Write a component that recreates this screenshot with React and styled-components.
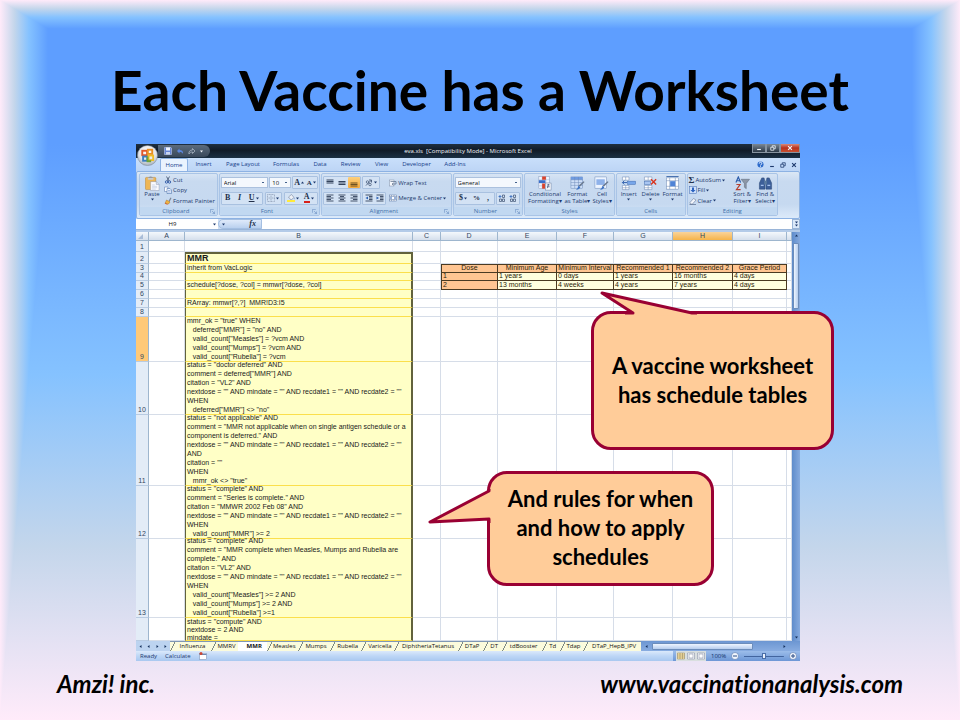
import React from "react";
import styled, { createGlobalStyle, css } from "styled-components";

const GlobalStyle = createGlobalStyle`
  *, *::before, *::after { box-sizing: border-box; }
  body { margin: 0; font-family: Lato, "Open Sans", sans-serif; font-variant-ligatures: none; color: #000; }
  button, input, select { font: inherit; color: inherit; margin: 0; padding: 0; border: 0; background: none; }
`;

/* ---------- slide ---------- */

const edge = "#ffebfa 0%, #c4d6eb 30%, #85c2ff 60%, #5e9eff 100%";

const Slide = styled.main`
  position: relative;
  isolation: isolate;
  min-height: 100vh;
  display: flex;
  flex-direction: column;
  overflow: hidden;
  background: linear-gradient(
    #ffebfa 0%, #c4d6eb 1.2%, #85c2ff 2.4%, #5e9eff 4%,
    #5e9eff 20%, #85c2ff 52%, #c4d6eb 76%, #ffebfa 100%
  );
  &::before, &::after {
    content: "";
    position: absolute;
    z-index: -1;
    top: 0;
    bottom: 0;
    width: 5%;
  }
  &::before {
    left: 0;
    background: linear-gradient(to right, ${edge});
    clip-path: polygon(0 0, 100% 4%, 100% 20%, 0 100%);
  }
  &::after {
    right: 0;
    background: linear-gradient(to left, ${edge});
    clip-path: polygon(100% 0, 0 4%, 0 20%, 100% 100%);
  }
`;

const Title = styled.h1`
  margin: 60px 48px 24px;
  font-size: 55px;
  line-height: 60px;
  font-weight: 700;
  text-align: center;
`;

const Stage = styled.section`
  position: relative;
  margin: 0 160px 0 136px;
`;

const Footer = styled.footer`
  display: flex;
  justify-content: space-between;
  padding: 9px 57px;
  font-size: 24px;
  line-height: 28px;
  font-weight: 700;
  font-style: italic;
`;

const SiteLink = styled.a`
  color: inherit;
  text-decoration: none;
`;

/* ---------- callouts ---------- */

const Callout = styled.aside`
  position: absolute;
  display: flex;
  align-items: center;
  justify-content: center;
  padding-bottom: 2px;
  border: 3px solid #990033;
  border-radius: 20px;
  background: #ffcc99;
  font-size: 22px;
  line-height: 29px;
  font-weight: 700;
  text-align: center;
  white-space: pre-line;
`;

const TableCallout = styled(Callout)`
  top: 167px;
  right: -34px;
  width: 243px;
  height: 139px;
`;

const RulesCallout = styled(Callout)`
  top: 327px;
  left: 351px;
  width: 227px;
  height: 115px;
`;

const Tail = styled.svg`
  position: absolute;
  overflow: visible;
  left: -3px;
  top: -3px;
  width: 1px;
  height: 1px;
  fill: #ffcc99;
  stroke: #990033;
  stroke-width: 3;
  stroke-linejoin: round;
`;

/* ---------- workbook window ---------- */

const Workbook = styled.article`
  font-family: "Open Sans", "Noto Sans", sans-serif;
  font-size: 6px;
  line-height: 8px;
  color: #1e3a6e;
  background: #bfd6f3;
`;

const TitleBar = styled.header`
  display: grid;
  grid-template-columns: 81px 1fr 81px;
  height: 14px;
  align-items: center;
  color: #f2f6fb;
  background: linear-gradient(#1f2f40, #101b28 45%, #1b3044);
`;

const QuickAccess = styled.div`
  display: flex;
  align-items: center;
  gap: 4px;
  height: 12px;
  width: 52px;
  margin-left: 22px;
  padding-left: 6px;
  border-radius: 0 6px 6px 0;
  background: linear-gradient(#5b6b7d, #39485a);
`;

const WindowName = styled.div`
  text-align: center;
  font-weight: 500;
`;

const WindowButtons = styled.div`
  display: grid;
  grid-template-columns: 14px 14px 20px;
  align-self: start;
  justify-self: end;
  height: 9px;
`;

const WindowButton = styled.button`
  display: flex;
  align-items: center;
  justify-content: center;
  height: 9px;
  border: 1px solid #8793a0;
  border-top: 0;
  background: ${(p) => (p.$close ? "linear-gradient(#d98a7a, #b8301c 50%, #c9502f)" : "linear-gradient(#7c8894, #2b3846)")};
`;

const OfficeButton = styled.button`
  position: absolute;
  top: 1px;
  left: 1px;
  width: 21px;
  height: 21px;
`;

const TabStrip = styled.nav`
  display: flex;
  align-items: stretch;
  height: 13px;
  padding-left: 24px;
  background: linear-gradient(#c9dffb, #bdd5f5);
`;

const RibbonTab = styled.button`
  width: ${(p) => p.$w}px;
  line-height: 11px;
  color: #17408b;
  ${(p) =>
    p.$active &&
    css`
      border: 1px solid #8db2e3;
      border-bottom: 0;
      border-radius: 2px 2px 0 0;
      background: #eaf3fe;
    `}
`;

const TabTools = styled.div`
  display: flex;
  align-items: center;
  gap: 5px;
  margin-left: auto;
  padding-right: 3px;
`;

const Ribbon = styled.div`
  display: grid;
  grid-template-columns: 79fr 102fr 131fr 71fr 91fr 70fr 92fr 18fr;
  column-gap: 1px;
  height: 48px;
  padding: 1px 2px 2px;
  border: 1px solid #8db2e3;
  border-radius: 2px;
  background: linear-gradient(#dbe7f5, #c8daf0 20%, #c6d9f0 70%, #dceafa);
`;

const Group = styled.fieldset`
  display: flex;
  flex-direction: column;
  min-width: 0;
  margin: 0;
  padding: 0;
  border: 1px solid #a9c4e6;
  border-radius: 2px;
  overflow: hidden;
`;

const GroupBody = styled.div`
  display: flex;
  flex: 1;
  min-height: 0;
  padding: 1px;
  gap: ${(p) => p.$gap || 0}px;
`;

const GroupLabel = styled.div`
  display: flex;
  height: 8px;
  padding: 0 2px;
  align-items: center;
  line-height: 8px;
  color: #4470a8;
  background: #c1d8f1;
  span { flex: 1; text-align: center; }
`;

const Stack = styled.div`
  display: flex;
  flex-direction: column;
  justify-content: space-around;
  flex: ${(p) => (p.$grow ? 1 : "none")};
  min-width: 0;
`;

const Line = styled.div`
  display: flex;
  align-items: center;
  gap: ${(p) => p.$gap || 0}px;
  height: 12px;
`;

const Tool = styled.button`
  display: flex;
  align-items: center;
  gap: 1px;
  height: 11px;
  min-width: ${(p) => p.$w || 0}px;
  justify-content: ${(p) => (p.$w ? "center" : "flex-start")};
  white-space: nowrap;
  ${(p) => p.$on && "background: linear-gradient(#fdd07c, #f5a93b); border-radius: 1px;"}
`;

const ToolSet = styled.div`
  display: flex;
  border: 1px solid #a9c1e0;
  border-radius: 1px;
  background: #d3e2f4;
`;

const BigTool = styled.button`
  display: flex;
  flex-direction: column;
  align-items: center;
  width: ${(p) => p.$w}px;
  padding-top: 1px;
  line-height: 7px;
  white-space: pre;
`;

const Combo = styled.select`
  appearance: none;
  width: ${(p) => p.$w}px;
  height: 11px;
  padding-left: 2px;
  color: #111;
  border: 1px solid #abc1de;
  background: #f4f8fd linear-gradient(#44618c, #44618c) right 3px center / 2px 1px no-repeat;
`;

const FormulaBar = styled.div`
  display: grid;
  grid-template-columns: 82px 44px 1fr 8px;
  height: 11px;
  background: #cfdff3;
  border-bottom: 1px solid #9ab5d8;
`;

const NameBox = styled.input`
  width: 100%;
  padding-right: 4px;
  text-align: center;
  color: #111;
  background: #fff;
`;

const NameArea = styled.label`
  display: flex;
  align-items: center;
  padding-right: 2px;
  background: #fff;
`;

const FxButton = styled.button`
  display: flex;
  align-items: center;
  justify-content: space-between;
  padding: 0 5px 0 3px;
  border-radius: 5px 0 0 5px;
  border: 1px solid #a4bfe2;
  background: linear-gradient(#dfeafa, #b9d0ee);
`;

const FormulaInput = styled.input`
  width: 100%;
  background: #fff;
`;

const ExpandButton = styled.button`
  display: flex;
  flex-direction: column;
  align-items: center;
  justify-content: center;
  border: 1px solid #9ab5d8;
  background: #dce9f9;
`;

/* ---------- sheet ---------- */

const SheetArea = styled.div`
  display: grid;
  grid-template-columns: 1fr 8px;
  border-top: 2px solid #b4cbe8;
`;

const Sheet = styled.table`
  width: 100%;
  table-layout: fixed;
  border-collapse: separate;
  border-spacing: 0;
  background: #fff;
  color: #1a1a1a;
  font-family: "Liberation Sans", Arial, sans-serif;
  font-size: 7px;
  line-height: 9px;
`;

const ColHead = styled.th`
  height: 9px;
  padding: 0;
  line-height: 8px;
  font-weight: 400;
  color: #33475f;
  border-right: 1px solid #9eb6ce;
  border-bottom: 1px solid #9eb6ce;
  background: ${(p) => (p.$on ? "linear-gradient(#f9d39a, #f6b44a)" : "linear-gradient(#f4f8fc, #d5dfec)")};
`;

const RowHead = styled.th`
  padding: 0;
  vertical-align: bottom;
  font-weight: 400;
  color: #33475f;
  border-right: 1px solid #9eb6ce;
  border-bottom: 1px solid #b8cbe2;
  background: ${(p) => (p.$on ? "#ffc978" : "#e3ecf7")};
`;

const Cell = styled.td`
  padding: 0;
  border-right: 1px solid #d6dde8;
  border-bottom: 1px solid #d6dde8;
`;

const RuleCell = styled(Cell)`
  border-left: 1px solid #62623c;
  border-right: 2px solid #62623c;
  border-bottom-color: #fbdf4c;
  border-top: ${(p) => (p.$first ? "2px solid #62623c" : "0")};
  background: #ffffc6;
`;

const GridCell = styled(Cell)`
  border-right-color: #4a3a22;
  border-bottom-color: #4a3a22;
  border-top: ${(p) => (p.$top ? "1px solid #4a3a22" : "0")};
  border-left: ${(p) => (p.$start ? "1px solid #4a3a22" : "0")};
  color: #2c1d08;
  background: ${(p) => (p.$fill ? "#ffc592" : "#ffffdf")};
`;

const CellText = styled.div`
  display: flex;
  flex-direction: column;
  justify-content: ${(p) => (p.$clip ? "flex-start" : "flex-end")};
  height: ${(p) => p.$h}px;
  overflow: ${(p) => (p.$clip ? "hidden" : "visible")};
  text-align: ${(p) => (p.$center ? "center" : "left")};
  white-space: pre;
  font-weight: ${(p) => (p.$strong ? 700 : 400)};
  font-size: ${(p) => (p.$strong ? 9 : 7)}px;
  line-height: ${(p) => (p.$clip ? 8 : 9)}px;
  padding-left: ${(p) => (p.$center ? 0 : 1)}px;
`;

const ScrollColumn = styled.div`
  display: flex;
  flex-direction: column;
  align-items: center;
  justify-content: space-between;
  padding: 2px 1px;
  color: #15305c;
  background: linear-gradient(to right, #5f8ccb, #86aade);
`;

const ScrollTop = styled.div`
  display: flex;
  flex-direction: column;
  align-items: center;
  gap: 6px;
`;

const Thumb = styled.div`
  border: 1px solid #6c8dbb;
  border-radius: 1px;
  background: linear-gradient(${(p) => (p.$across ? "to bottom" : "to right")}, #eef5ff, #b6cdee);
  ${(p) => (p.$across ? "flex: none; width: 101px; height: 7px;" : "width: 6px; height: 66px;")}
`;

const SheetTabs = styled.nav`
  display: flex;
  height: 10px;
  align-items: center;
  background: #bcd3f0;
`;

const NavArrows = styled.div`
  display: flex;
  justify-content: space-around;
  width: 34px;
  color: #15305c;
`;

const SheetTab = styled.button`
  display: flex;
  justify-content: center;
  height: 10px;
  padding-left: 4px;
  flex: ${(p) => p.$w} 1 0;
  min-width: 0;
  line-height: 9px;
  white-space: nowrap;
  color: #111;
  border-top: 1px solid #7f97b5;
  background: ${(p) => (p.$on ? "#fff" : "linear-gradient(117deg, #fbfbdc 4px, #7d8a86 4px, #7d8a86 5px, #fbfbdc 5px)")};
  font-weight: ${(p) => (p.$on ? 700 : 400)};
`;

const TabSet = styled.div`
  display: flex;
  flex: 1;
  min-width: 0;
`;

const ScrollRow = styled.div`
  display: flex;
  align-items: center;
  width: 159px;
  height: 10px;
  padding: 0 14px 0 4px;
  gap: 4px;
  color: #15305c;
  background: linear-gradient(#6c96d2, #88ace0);
`;

const ScrollEnd = styled.span`
  margin-left: auto;
`;

const StatusBar = styled.footer`
  display: grid;
  grid-template-columns: 1fr 127px;
  height: 10px;
  background: linear-gradient(#dbe9fb, #bdd6f6 50%, #a9c8f0);
`;

const StatusLeft = styled.div`
  display: flex;
  align-items: center;
  gap: 8px;
  padding-left: 4px;
`;

const StatusRight = styled.div`
  display: flex;
  align-items: center;
  gap: 5px;
  padding: 0 3px;
  color: #12326b;
  background: linear-gradient(#9cbdea, #6d97d6);
`;

const ViewSet = styled.div`
  display: flex;
  gap: 2px;
  padding: 1px;
  background: #d9dfdf;
`;

const Zoom = styled.input`
  appearance: none;
  flex: 1;
  min-width: 0;
  height: 8px;
  background: linear-gradient(#42659f, #42659f) center / 100% 1px no-repeat;
  &::-webkit-slider-thumb {
    appearance: none;
    width: 4px;
    height: 6px;
    border: 1px solid #4a6ea8;
    background: #e9f1fc;
  }
`;

/* ---------- drawings ---------- */

const Glyph = styled.svg`
  display: block;
  flex: none;
  width: ${(p) => p.$w || 8}px;
  height: ${(p) => p.$w || 8}px;
`;

const Arrow = ({ up, left, right }) => (
  <Glyph $w={3} viewBox="0 0 6 6" aria-hidden="true">
    <path fill="currentColor" d={up ? "M0 5h6L3 1z" : left ? "M5 0v6L1 3z" : right ? "M1 0v6l4-3z" : "M0 1h6L3 5z"} />
  </Glyph>
);

const art = {
  office: (
    <>
      <defs>
        <radialGradient id="orb" cx="50%" cy="35%" r="65%">
          <stop offset="0" stopColor="#ffffff" />
          <stop offset="0.65" stopColor="#e4e6ea" />
          <stop offset="1" stopColor="#a3adba" />
        </radialGradient>
      </defs>
      <circle cx="10" cy="10" r="9.6" fill="url(#orb)" stroke="#7b8796" strokeWidth=".5" />
      <g fill="none" strokeWidth="1.8">
        <rect x="5" y="5.5" width="4.6" height="4.2" stroke="#e2572a" />
        <rect x="10.3" y="4.5" width="4.2" height="4" stroke="#e98f24" />
        <rect x="5.8" y="11" width="4" height="4" stroke="#3a7dc0" />
        <rect x="11" y="10" width="4.4" height="4.4" stroke="#f0bd28" />
        <path d="M10 11v4.5h3.5" stroke="#6aa33b" />
      </g>
    </>
  ),
  save: (
    <>
      <path d="M1 1h13l1 1v13H1z" fill="#6585d6" stroke="#cfdafa" />
      <path d="M4 1h8v6H4z" fill="#f2f6ff" />
      <path d="M4 10h8v5H4z" fill="#c9d6f0" />
    </>
  ),
  undo: <path d="M2 8l5-5v3c5 0 8 3 7 8-1-3-3-4-7-4v3z" fill="#5b86dc" />,
  redo: <path d="M14 8L9 3v3C4 6 1 9 2 14c1-3 3-4 7-4v3z" fill="none" stroke="#aeb8c5" strokeWidth="1.5" />,
  paste: (
    <>
      <rect x="1" y="3" width="22" height="26" rx="2" fill="#eeb654" stroke="#b9812e" />
      <path d="M7 5q0-4 5-4t5 4z" fill="#8c939c" />
      <rect x="6" y="4" width="12" height="4" fill="#c9ccd2" />
      <path d="M12 12h12l6 6v13H12z" fill="#fbfcff" stroke="#8794b0" />
      <path d="M24 12v6h6" fill="#d6deee" stroke="#8794b0" />
      <path d="M15 19h6M15 22h11M15 25h11M15 28h8" stroke="#a4b5d4" />
    </>
  ),
  cut: (
    <>
      <path d="M5 1l5 9M11 1L6 10" stroke="#4d5f7a" strokeWidth="1.8" />
      <circle cx="5" cy="12" r="2.4" fill="none" stroke="#2f59a6" strokeWidth="1.8" />
      <circle cx="11" cy="12" r="2.4" fill="none" stroke="#2f59a6" strokeWidth="1.8" />
    </>
  ),
  copy: (
    <>
      <path d="M1 2h7v9H1z" fill="#fff" stroke="#4e6fa8" />
      <path d="M6 5h6l3 3v7H6z" fill="#e9f1ff" stroke="#36609f" />
      <path d="M8 9h5M8 12h5" stroke="#5d83c0" />
    </>
  ),
  brush: (
    <>
      <path d="M9 8l4-7 2 1-4 8z" fill="#7c8798" />
      <path d="M5 6l7 4-3 4-7-1z" fill="#f2b33d" stroke="#a9782a" />
      <path d="M2 12l5 3" stroke="#d8522c" strokeWidth="1.5" />
    </>
  ),
  borders: <path d="M1 1h14v14H1zM8 1v14M1 8h14" fill="none" stroke="#8d9bb3" strokeDasharray="2 1" strokeWidth="1.4" />,
  bucket: (
    <>
      <path d="M3 6l6-5 5 6-6 5z" fill="#eef1f6" stroke="#5f6f8a" />
      <path d="M14 7q2 3 0 4z" fill="#3d6db8" />
      <rect y="12" width="16" height="4" fill="#ffea3b" />
    </>
  ),
  barsTop: <path d="M1 2h14M1 5h14M1 8h14" stroke="#33435c" strokeWidth="2" />,
  barsMid: <path d="M1 5h14M1 8h14M1 11h14" stroke="#33435c" strokeWidth="2" />,
  barsLow: <path d="M1 8h14M1 11h14M1 14h14" stroke="#6d5120" strokeWidth="2" />,
  left: <path d="M1 2h14M1 5h9M1 8h14M1 11h9M1 14h14" stroke="#33435c" strokeWidth="1.8" />,
  mid: <path d="M1 2h14M4 5h8M1 8h14M4 11h8M1 14h14" stroke="#33435c" strokeWidth="1.8" />,
  right: <path d="M1 2h14M6 5h9M1 8h14M6 11h9M1 14h14" stroke="#33435c" strokeWidth="1.8" />,
  outdent: (
    <>
      <path d="M1 2h14M8 5h7M8 8h7M8 11h7M1 14h14" stroke="#33435c" strokeWidth="1.8" />
      <path d="M6 5v6L1 8z" fill="#2c62b7" />
    </>
  ),
  indent: (
    <>
      <path d="M1 2h14M8 5h7M8 8h7M8 11h7M1 14h14" stroke="#33435c" strokeWidth="1.8" />
      <path d="M1 5v6l5-3z" fill="#2c62b7" />
    </>
  ),
  orient: (
    <>
      <path d="M2 13L13 2M13 2v5M13 2H8" stroke="#46597a" strokeWidth="1.8" fill="none" />
      <circle cx="5" cy="6" r="2.5" fill="none" stroke="#46597a" strokeWidth="1.5" />
      <circle cx="10" cy="11" r="2.5" fill="none" stroke="#46597a" strokeWidth="1.5" />
    </>
  ),
  wrap: (
    <>
      <rect x="1" y="2" width="9" height="12" fill="#f6f8fc" stroke="#7f8fa8" />
      <path d="M3 5h11v5H7M9 8l-3 2 3 3" stroke="#61748f" strokeWidth="1.5" fill="none" />
    </>
  ),
  merge: (
    <>
      <rect x="1" y="2" width="14" height="12" fill="#fff" stroke="#5874a0" />
      <path d="M1 5h14M1 11h14M5 2v3M10 2v3M5 11v3M10 11v3" stroke="#5874a0" />
      <path d="M2 8h4M10 8h4" stroke="#2c62b7" strokeWidth="2" />
    </>
  ),
  decimals: (
    <>
      <path d="M2 5h5M5 2L2 5l3 3" stroke="#2c62b7" strokeWidth="1.6" fill="none" />
      <path d="M9 2h4v5H9zM3 10h4v5H3zM9 10h4v5H9z" fill="none" stroke="#46597a" strokeWidth="1.5" />
    </>
  ),
  conditional: (
    <>
      <rect x="4" y="1" width="22" height="26" fill="#f4f8ff" stroke="#7d93b8" />
      <path d="M4 8h22M4 15h22M4 21h22M11 1v26M19 1v26" stroke="#9ab0d2" />
      <rect x="11" y="1" width="8" height="7" fill="#d8432c" />
      <rect x="4" y="9" width="14" height="6" fill="#3a6fca" />
      <rect x="11" y="16" width="6" height="11" fill="#d8432c" />
      <rect x="18" y="15" width="12" height="15" fill="#f7f9fd" stroke="#66789a" />
      <path d="M21 19h6M21 23h6M25 17l-3 9" stroke="#41557c" strokeWidth="1.5" />
    </>
  ),
  table: (
    <>
      <rect x="2" y="2" width="25" height="24" fill="#cfe0f8" stroke="#6684b4" />
      <rect x="2" y="2" width="25" height="6" fill="#6f9be0" />
      <path d="M2 8h25M2 14h25M2 20h25M10 2v24M18 2v24" stroke="#6684b4" />
      <path d="M29 11l2 2-10 10-3-2z" fill="#68788f" />
      <path d="M18 21l4 3q-2 6-9 5 4-2 5-8z" fill="#3f74c5" />
    </>
  ),
  styles: (
    <>
      <rect x="2" y="2" width="25" height="24" fill="#edf4ff" stroke="#6684b4" />
      <rect x="5" y="7" width="18" height="12" fill="#8fb2ea" />
      <path d="M29 11l2 2-10 10-3-2z" fill="#68788f" />
      <path d="M18 21l4 3q-2 6-9 5 4-2 5-8z" fill="#3f74c5" />
    </>
  ),
  insert: (
    <>
      <path d="M3 2h14v7H3zM3 20h14v9H3zM10 2v7M10 20v9M3 25h14" fill="#fff" stroke="#5e7cab" />
      <rect x="14" y="11" width="17" height="7" fill="#77a6ea" stroke="#3d67ab" />
      <path d="M13 14H3m4-4l-4 4 4 4" fill="none" stroke="#2b5cab" strokeWidth="2" />
    </>
  ),
  remove: (
    <>
      <path d="M3 2h16v7H3zM3 20h16v9H3zM11 2v7M11 20v9M3 25h16" fill="#fff" stroke="#5e7cab" />
      <rect x="3" y="11" width="13" height="7" fill="#a9c6f2" stroke="#3d67ab" />
      <path d="M17 7l11 11M28 7L17 18" stroke="#d8341f" strokeWidth="3" />
    </>
  ),
  format: (
    <>
      <rect x="3" y="4" width="26" height="24" fill="#fff" stroke="#5e7cab" />
      <path d="M3 10h26M3 22h26M10 4v24M22 4v24" stroke="#5e7cab" />
      <rect x="11" y="11" width="11" height="11" fill="#4f83d6" />
      <path d="M3 1h26" stroke="#3d67ab" strokeWidth="2" />
    </>
  ),
  fill: (
    <>
      <rect x="1" y="1" width="14" height="14" fill="#cfe0fa" stroke="#3e68ae" />
      <path d="M6 3h4v5h3l-5 5-5-5h3z" fill="#2a62c0" />
    </>
  ),
  clear: (
    <>
      <path d="M2 11l7-8 5 3-7 8H3z" fill="#f3f5fb" stroke="#56698a" />
      <path d="M1 15h13" stroke="#56698a" strokeWidth="1.4" />
    </>
  ),
  sort: (
    <>
      <path d="M2 14L7 2l5 12M4 10h6" stroke="#2b5cab" strokeWidth="2.4" fill="none" />
      <path d="M3 18h8l-8 11h9" stroke="#b5402f" strokeWidth="2.4" fill="none" />
      <path d="M13 7h18l-7 9v11l-4-3v-8z" fill="#8d97a6" stroke="#566274" />
    </>
  ),
  find: (
    <>
      <path d="M8 4h5l2 10v14H3V15zM19 4h5l5 11v13H17V14z" fill="#3d5f99" stroke="#22406f" />
      <path d="M13 10h6v8h-6z" fill="#58799f" />
      <path d="M6 20h6M20 20h6" stroke="#a5c1ee" strokeWidth="3" />
    </>
  ),
  launcher: <path d="M1 9V1h8M5 5l6 6M11 6v5H6" fill="none" stroke="#6b8fc2" strokeWidth="1.5" />,
  help: (
    <>
      <circle cx="8" cy="8" r="7" fill="#2d6bcb" />
      <path d="M5 6q0-3 3-3t3 3q0 2-3 3v1M8 12v2" stroke="#fff" strokeWidth="2" fill="none" />
    </>
  ),
  minimize: <path d="M3 12h10" stroke="currentColor" strokeWidth="3" />,
  restore: <path d="M2 6h8v8H2zM6 6V2h8v8h-4" fill="none" stroke="currentColor" strokeWidth="2" />,
  close: <path d="M3 3l10 10M13 3L3 13" stroke="currentColor" strokeWidth="3" />,
  corner: <path d="M14 4v10H4z" fill="#a9bdd8" />,
  macro: (
    <>
      <rect x="1" y="3" width="14" height="12" fill="#fff" stroke="#6f87ae" />
      <path d="M1 5h14" stroke="#6f87ae" strokeWidth="2" />
      <circle cx="4" cy="3" r="3" fill="#cf4733" />
    </>
  ),
  grid: <path d="M1 2h14v12H1zM1 6h14M1 10h14M6 2v12M11 2v12" fill="#ffe9a8" stroke="#8a7f5a" />,
  page: <path d="M1 2h14v12H1zM4 4h8v8H4z" fill="#fff" stroke="#77809a" />,
  plus: (
    <>
      <circle cx="8" cy="8" r="7" fill="#f4f8fe" stroke="#44669f" />
      <path d="M4 8h8M8 4v8" stroke="#2b4c86" strokeWidth="2" />
    </>
  ),
  minus: (
    <>
      <circle cx="8" cy="8" r="7" fill="#f4f8fe" stroke="#44669f" />
      <path d="M4 8h8" stroke="#2b4c86" strokeWidth="2" />
    </>
  ),
};

const Icon = ({ name, size = 8, box = 16 }) => (
  <Glyph $w={size} viewBox={`0 0 ${box} ${box}`} aria-hidden="true">
    {art[name]}
  </Glyph>
);

const Letter = styled.span`
  font-family: "Liberation Serif", serif;
  font-weight: 700;
  font-size: ${(p) => p.$size || 8}px;
  font-style: ${(p) => (p.$italic ? "italic" : "normal")};
  text-decoration: ${(p) => (p.$under ? "underline" : "none")};
  border-bottom: ${(p) => (p.$bar ? "2px solid #d8201a" : "0")};
  line-height: 8px;
  color: #22304a;
`;

/* ---------- data ---------- */

const ribbonTabs = [
  ["Home", 28], ["Insert", 31], ["Page Layout", 48], ["Formulas", 38], ["Data", 30],
  ["Review", 31], ["View", 31], ["Developer", 39], ["Add-Ins", 38],
];

const columns = [
  ["", 13], ["A", 36], ["B", 228], ["C", 28], ["D", 57], ["E", 59],
  ["F", 57], ["G", 59], ["H", 60], ["I", 54], ["", 5],
];

const dates = 'nextdose = "" AND mindate = "" AND recdate1 = "" AND recdate2 = ""';

const rows = [
  { h: 11, lines: [] },
  { h: 12, lines: ["MMR"], strong: true },
  { h: 9, lines: ["inherit from VacLogic"], grid: ["Dose", "Minimum Age", "Minimum Interval", "Recommended 1", "Recommended 2", "Grace Period"] },
  { h: 8, lines: [""], grid: ["1", "1 years", "0 days", "1 years", "16 months", "4 days"] },
  { h: 9, lines: ["schedule[?dose, ?col] = mmwr[?dose, ?col]"], grid: ["2", "13 months", "4 weeks", "4 years", "7 years", "4 days"] },
  { h: 9, lines: [""] },
  { h: 9, lines: ["RArray: mmwr[?,?]  MMR!D3:I5"] },
  { h: 9, lines: [""] },
  { h: 45, lines: ['mmr_ok = "true" WHEN', '   deferred["MMR"] = "no" AND', '   valid_count["Measles"] = ?vcm AND', '   valid_count["Mumps"] = ?vcm AND', '   valid_count["Rubella"] = ?vcm'] },
  { h: 53, lines: ['status = "doctor deferred" AND', 'comment = deferred["MMR"] AND', 'citation = "VL2" AND', dates, "WHEN", '   deferred["MMR"] <> "no"'] },
  { h: 71, lines: ['status = "not applicable" AND', 'comment = "MMR not applicable when on single antigen schedule or a', 'component is deferred." AND', dates, "AND", 'citation = ""', "WHEN", '   mmr_ok <> "true"'] },
  { h: 53, lines: ['status = "complete" AND', 'comment = "Series is complete." AND', 'citation = "MMWR 2002 Feb 08" AND', dates, "WHEN", '   valid_count["MMR"] >= 2'] },
  { h: 79, lines: ['status = "complete" AND', 'comment = "MMR complete when Measles, Mumps and Rubella are', 'complete." AND', 'citation = "VL2" AND', dates, "WHEN", '   valid_count["Measles"] >= 2 AND', '   valid_count["Mumps"] >= 2 AND', '   valid_count["Rubella"] >=1'] },
  { h: 23, lines: ['status = "compute" AND', "nextdose = 2 AND", "mindate ="], clip: true },
];

const sheetTabs = [
  ["Influenza", 42], ["MMRV", 26], ["MMR", 28], ["Measles", 31], ["Mumps", 32], ["Rubella", 31], ["Varicella", 33],
  ["DiphtheriaTetanus", 67], ["DTaP", 24], ["DT", 17], ["tdBooster", 41], ["Td", 16], ["Tdap", 22], ["DTaP_HepB_IPV", 61],
];

/* ---------- parts ---------- */

const RibbonGroup = ({ label, launcher, gap, children }) => (
  <Group aria-label={label}>
    <GroupBody $gap={gap}>{children}</GroupBody>
    <GroupLabel>
      <span>{label}</span>
      {launcher && <Icon name="launcher" size={5} box={12} />}
    </GroupLabel>
  </Group>
);

const Big = ({ icon, w, label, arrow }) => (
  <BigTool $w={w} type="button">
    <Icon name={icon} size={15} box={32} />
    <span>{label}</span>
    {arrow && <Arrow />}
  </BigTool>
);

const IconTool = ({ icon, label, w, on, arrow, text }) => (
  <Tool type="button" $w={w} $on={on} aria-label={label}>
    <Icon name={icon} size={8} />
    {text && <span>{text}</span>}
    {arrow && <Arrow />}
  </Tool>
);

const RibbonBar = () => (
  <Ribbon>
    <RibbonGroup label="Clipboard" launcher gap={1}>
      <Big icon="paste" w={22} label="Paste" arrow />
      <Stack>
        <IconTool icon="cut" label="Cut" text="Cut" />
        <IconTool icon="copy" label="Copy" text="Copy" />
        <IconTool icon="brush" label="Format Painter" text="Format Painter" />
      </Stack>
    </RibbonGroup>
    <RibbonGroup label="Font" launcher>
      <Stack $grow>
        <Line $gap={1}>
          <Combo $w={48} aria-label="Font" defaultValue="Arial"><option>Arial</option></Combo>
          <Combo $w={22} aria-label="Font size" defaultValue="10"><option>10</option></Combo>
          <ToolSet>
            <Tool $w={12} type="button" aria-label="Grow font"><Letter>A</Letter><Arrow up /></Tool>
            <Tool $w={12} type="button" aria-label="Shrink font"><Letter $size={7}>A</Letter><Arrow /></Tool>
          </ToolSet>
        </Line>
        <Line $gap={2}>
          <ToolSet>
            <Tool $w={12} type="button" aria-label="Bold"><Letter>B</Letter></Tool>
            <Tool $w={12} type="button" aria-label="Italic"><Letter $italic>I</Letter></Tool>
            <Tool $w={16} type="button" aria-label="Underline"><Letter $under>U</Letter><Arrow /></Tool>
          </ToolSet>
          <ToolSet><IconTool icon="borders" label="Borders" w={15} arrow /></ToolSet>
          <ToolSet>
            <IconTool icon="bucket" label="Fill colour" w={16} arrow />
            <Tool $w={16} type="button" aria-label="Font colour"><Letter $bar>A</Letter><Arrow /></Tool>
          </ToolSet>
        </Line>
      </Stack>
    </RibbonGroup>
    <RibbonGroup label="Alignment" launcher gap={3}>
      <Stack>
        <Line $gap={1}>
          <ToolSet>
            <IconTool icon="barsTop" label="Top align" w={12} />
            <IconTool icon="barsMid" label="Middle align" w={12} />
            <IconTool icon="barsLow" label="Bottom align" w={12} on />
          </ToolSet>
          <ToolSet><IconTool icon="orient" label="Orientation" w={16} arrow /></ToolSet>
        </Line>
        <Line $gap={1}>
          <ToolSet>
            <IconTool icon="left" label="Align left" w={12} />
            <IconTool icon="mid" label="Center" w={12} />
            <IconTool icon="right" label="Align right" w={12} />
          </ToolSet>
          <ToolSet>
            <IconTool icon="outdent" label="Decrease indent" w={11} />
            <IconTool icon="indent" label="Increase indent" w={11} />
          </ToolSet>
        </Line>
      </Stack>
      <Stack>
        <IconTool icon="wrap" label="Wrap Text" text="Wrap Text" />
        <IconTool icon="merge" label="Merge & Center" text="Merge & Center" arrow />
      </Stack>
    </RibbonGroup>
    <RibbonGroup label="Number" launcher>
      <Stack $grow>
        <Line><Combo $w={66} aria-label="Number format" defaultValue="General"><option>General</option></Combo></Line>
        <Line $gap={1}>
          <ToolSet>
            <Tool $w={15} type="button" aria-label="Currency"><Letter>$</Letter><Arrow /></Tool>
            <Tool $w={12} type="button" aria-label="Percent"><Letter $size={7}>%</Letter></Tool>
            <Tool $w={11} type="button" aria-label="Comma"><Letter>,</Letter></Tool>
          </ToolSet>
          <ToolSet>
            <IconTool icon="decimals" label="Increase decimal" w={11} />
            <IconTool icon="decimals" label="Decrease decimal" w={11} />
          </ToolSet>
        </Line>
      </Stack>
    </RibbonGroup>
    <RibbonGroup label="Styles">
      <Big icon="conditional" w={38} label={"Conditional\nFormatting\u25BE"} />
      <Big icon="table" w={28} label={"Format\nas Table\u25BE"} />
      <Big icon="styles" w={22} label={"Cell\nStyles\u25BE"} />
    </RibbonGroup>
    <RibbonGroup label="Cells">
      <Big icon="insert" w={22} label="Insert" arrow />
      <Big icon="remove" w={22} label="Delete" arrow />
      <Big icon="format" w={22} label="Format" arrow />
    </RibbonGroup>
    <RibbonGroup label="Editing" gap={1}>
      <Stack $grow>
        <Tool type="button"><Letter $size={9}>Σ</Letter><span>AutoSum</span><Arrow /></Tool>
        <IconTool icon="fill" label="Fill" text="Fill" arrow />
        <IconTool icon="clear" label="Clear" text="Clear" arrow />
      </Stack>
      <Big icon="sort" w={22} label={"Sort &\nFilter\u25BE"} />
      <Big icon="find" w={22} label={"Find &\nSelect\u25BE"} />
    </RibbonGroup>
  </Ribbon>
);

const Grid = () => (
  <Sheet aria-label="MMR worksheet">
    <colgroup>
      {columns.map(([, w], i) => <col key={i} width={`${(w / 656) * 100}%`} />)}
    </colgroup>
    <thead>
      <tr>
        {columns.map(([name], i) => (
          <ColHead key={i} scope="col" $on={name === "H"}>{i === 0 ? <Icon name="corner" /> : name}</ColHead>
        ))}
      </tr>
    </thead>
    <tbody>
      {rows.map((row, r) => (
        <tr key={r}>
          <RowHead scope="row" $on={r === 8}>
            <CellText $h={row.h - 1} $center>{r < 13 ? r + 1 : ""}</CellText>
          </RowHead>
          <Cell />
          {r === 0 ? <Cell /> : (
            <RuleCell $first={r === 1}>
              <CellText $h={row.h - (r === 1 ? 3 : 1)} $strong={row.strong} $clip={row.clip}>
                {row.lines.map((line, i) => <span key={i}>{line}</span>)}
              </CellText>
            </RuleCell>
          )}
          <Cell />
          {[0, 1, 2, 3, 4, 5].map((c) =>
            row.grid ? (
              <GridCell key={c} $fill={r === 2 || c === 0} $top={r === 2} $start={c === 0}>
                <CellText $h={row.h - (r === 2 ? 2 : 1)} $center={r === 2}>{row.grid[c]}</CellText>
              </GridCell>
            ) : <Cell key={c} />
          )}
          <Cell />
        </tr>
      ))}
    </tbody>
  </Sheet>
);

export default function App() {
  return (
    <>
      <GlobalStyle />
      <Slide>
        <Title>Each Vaccine has a Worksheet</Title>
        <Stage>
          <Workbook>
            <TitleBar>
              <QuickAccess>
                <Icon name="save" />
                <Icon name="undo" />
                <Icon name="redo" />
                <Arrow />
              </QuickAccess>
              <WindowName>eva.xls&nbsp; [Compatibility Mode] - Microsoft Excel</WindowName>
              <WindowButtons>
                <WindowButton type="button" aria-label="Minimize"><Icon name="minimize" size={6} /></WindowButton>
                <WindowButton type="button" aria-label="Restore"><Icon name="restore" size={6} /></WindowButton>
                <WindowButton type="button" aria-label="Close" $close><Icon name="close" size={6} /></WindowButton>
              </WindowButtons>
            </TitleBar>
            <TabStrip aria-label="Ribbon tabs">
              {ribbonTabs.map(([name, w], i) => (
                <RibbonTab key={name} type="button" $w={w} $active={i === 0}>{name}</RibbonTab>
              ))}
              <TabTools>
                <Icon name="help" size={7} />
                <Icon name="minimize" size={6} />
                <Icon name="restore" size={6} />
                <Icon name="close" size={6} />
              </TabTools>
            </TabStrip>
            <RibbonBar />
            <FormulaBar>
              <NameArea>
                <NameBox aria-label="Name box" defaultValue="H9" />
                <Arrow />
              </NameArea>
              <FxButton type="button" aria-label="Insert function">
                <Arrow />
                <Letter $italic>fx</Letter>
              </FxButton>
              <FormulaInput aria-label="Formula" />
              <ExpandButton type="button" aria-label="Expand formula bar">
                <Arrow />
                <Arrow />
              </ExpandButton>
            </FormulaBar>
            <SheetArea>
              <Grid />
              <ScrollColumn>
                <ScrollTop>
                  <Arrow up />
                  <Thumb />
                </ScrollTop>
                <Arrow />
              </ScrollColumn>
            </SheetArea>
            <SheetTabs aria-label="Sheets">
              <NavArrows>
                <Arrow left /><Arrow left /><Arrow right /><Arrow right />
              </NavArrows>
              <TabSet>
                {sheetTabs.map(([name, w], i) => (
                  <SheetTab key={name} type="button" $w={w} $on={i === 2}>{name}</SheetTab>
                ))}
              </TabSet>
              <ScrollRow>
                <Arrow left />
                <Thumb $across />
                <ScrollEnd><Arrow right /></ScrollEnd>
              </ScrollRow>
            </SheetTabs>
            <StatusBar>
              <StatusLeft>
                <span>Ready</span>
                <span>Calculate</span>
                <Icon name="macro" />
              </StatusLeft>
              <StatusRight>
                <ViewSet>
                  <Icon name="grid" />
                  <Icon name="page" />
                  <Icon name="page" />
                </ViewSet>
                <span>100%</span>
                <Icon name="minus" />
                <Zoom type="range" aria-label="Zoom" defaultValue="50" />
                <Icon name="plus" />
              </StatusRight>
            </StatusBar>
          </Workbook>
          <OfficeButton type="button" aria-label="Office menu">
            <Icon name="office" size={21} box={20} />
          </OfficeButton>
          <TableCallout>
            <Tail aria-hidden="true">
              <path d="M42 4v-2L11 -18L101 2v3" stroke="none" />
              <path d="M34 2H42L11 -18L101 2H106" />
            </Tail>
            {"A vaccine worksheet\nhas schedule tables"}
          </TableCallout>
          <RulesCallout>
            <Tail aria-hidden="true">
              <path d="M5 20H2L-57 51L2 48H5" stroke="none" />
              <path d="M2 18V20L-57 51L2 48V52" />
            </Tail>
            {"And rules for when\nand how to apply\nschedules"}
          </RulesCallout>
        </Stage>
        <Footer>
          <span>Amzi! inc.</span>
          <SiteLink href="#site">www.vaccinationanalysis.com</SiteLink>
        </Footer>
      </Slide>
    </>
  );
}
